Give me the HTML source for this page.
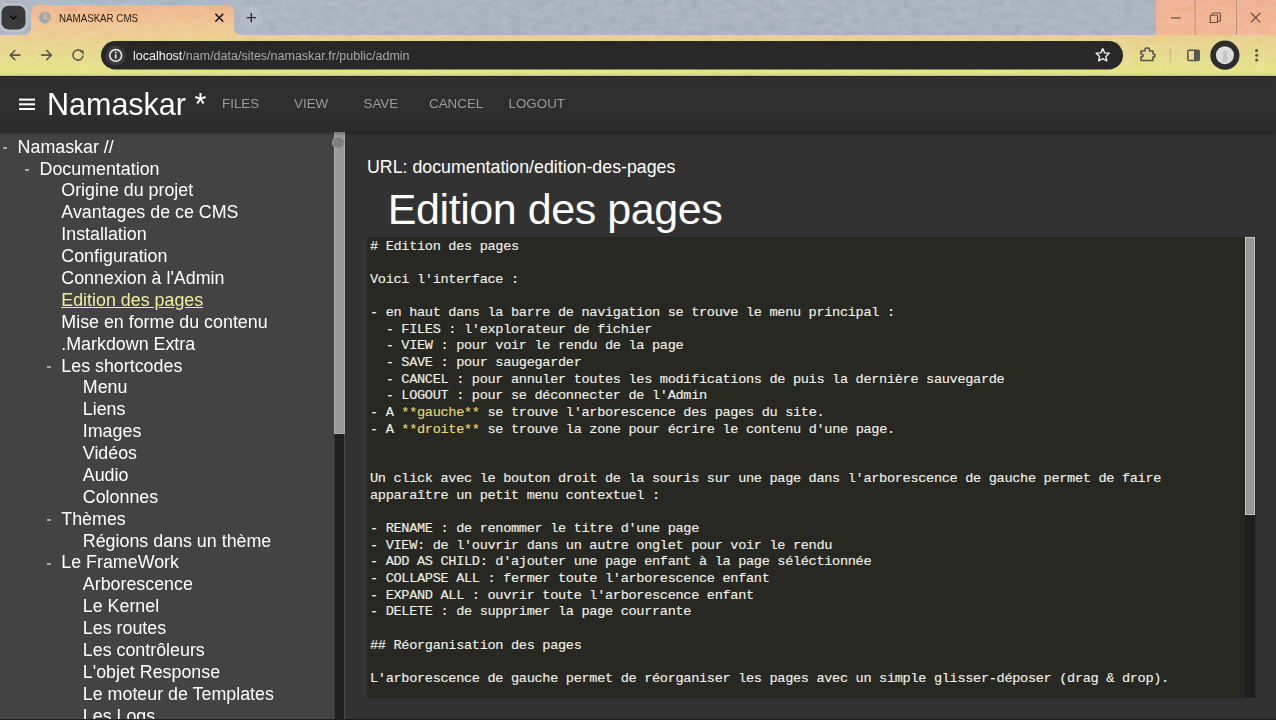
<!DOCTYPE html>
<html><head><meta charset="utf-8">
<style>
*{box-sizing:border-box;margin:0;padding:0}
html,body{width:1276px;height:720px;overflow:hidden;background:#333;font-family:"Liberation Sans",sans-serif}
svg{position:absolute;left:0;top:0;overflow:visible}
#strip{position:absolute;left:0;top:0;width:1276px;height:35px;background:linear-gradient(90deg,#a6b0bb 0%,#9faab8 40%,#a0aab7 80%,#a2acb8 100%)}
#winctl{position:absolute;left:1156px;top:0;width:120px;height:35px;background:linear-gradient(180deg,#eea98a,#eeb08b)}
#toolbar{position:absolute;left:0;top:35px;width:1276px;height:41px;background:linear-gradient(180deg,#e8c884 0%,#e7cc85 15%,#e3d782 55%,#e1e07c 88%,#dfdf7b 100%)}
#omni{position:absolute;left:101px;top:41px;width:1022px;height:29px;border-radius:15px;background:#282828}
#url{position:absolute;left:133px;top:49px;font-size:12.5px;line-height:15px;color:#a8a8a8;white-space:pre}
#url b{font-weight:normal;color:#f2f2f2}
#nav{position:absolute;left:0;top:76px;width:1276px;height:56px;border-top:1px solid #22221a;background:linear-gradient(180deg,#2e2e2e 0%,#2f2f2f 70%,#2a2a2a 100%);box-shadow:0 1px 4px rgba(0,0,0,0.45);z-index:1}
#brand{z-index:2;position:absolute;left:47px;top:87px;font-size:30.5px;line-height:34px;color:#fff;white-space:pre}
.menu{z-index:2;position:absolute;top:96px;font-size:13.4px;color:#9a9a9a;line-height:15px;white-space:pre}
#side{position:absolute;left:0;top:131px;width:334px;height:589px;background:#434343;overflow:hidden}
#sbar{position:absolute;left:334px;top:131px;width:11px;height:589px;background:#202020;border-left:1px solid #3a3a3a;border-right:1px solid #4a4a4a}
#sthumb{position:absolute;left:334px;top:132px;width:11px;height:302px;background:#999;border:1px solid #b0b0b0;border-top-color:#aaa}
#knob{position:absolute;left:331.6px;top:135.8px;width:13.2px;height:13.2px;border-radius:50%;background:#7f7f7f;border:1px solid #a0a0a0;z-index:1}
#content{position:absolute;left:345px;top:131px;width:931px;height:589px;background:#323232}
.row{position:absolute;height:22px;font-size:17.85px;color:#fff;white-space:pre;line-height:22px}
.row.sel{color:#eeeea0;text-decoration:underline}
.dash{position:absolute;width:4px;height:2px;background:#a8a8a8}
#urlline{position:absolute;left:367px;top:156px;font-size:17.8px;line-height:22px;color:#fff;white-space:pre}
#h1{position:absolute;left:387.8px;top:184.5px;letter-spacing:-0.43px;font-size:43px;line-height:48px;color:#fff;white-space:pre}
#editor{position:absolute;left:367px;top:237px;width:878px;height:461px;background:#272822;overflow:hidden}
#escroll{position:absolute;left:1244.6px;top:237px;width:10.8px;height:461px;background:#1f1f1f;box-shadow:1px 0 0 #2a2a2a}
#ethumb{position:absolute;left:1244.6px;top:237px;width:10.8px;height:278px;background:#979797;border:1px solid #c4c4c4}
.ln{-webkit-text-stroke:0.12px currentColor;position:absolute;left:3px;font-family:"Liberation Mono",monospace;font-size:13.6px;letter-spacing:-0.325px;color:#f2f2ea;white-space:pre;height:17px;line-height:16.615px}
.y{color:#e6db74}
#bottomline{position:absolute;left:0;top:719px;width:1276px;height:1px;background:#1e1e1e}
</style></head><body>
<div id="strip"></div>
<div id="winctl"></div>
<div id="toolbar"></div>
<svg width="1276" height="76" viewBox="0 0 1276 76">
  <defs>
    <linearGradient id="tabg" x1="0" y1="0" x2="0" y2="1">
      <stop offset="0" stop-color="#f0ac82"/>
      <stop offset="0.6" stop-color="#eebd87"/>
      <stop offset="1" stop-color="#e9c78a"/>
    </linearGradient>
    <filter id="nz" x="0" y="0" width="100%" height="100%" filterUnits="userSpaceOnUse">
      <feTurbulence type="fractalNoise" baseFrequency="0.09 0.16" numOctaves="3" seed="11"/>
      <feColorMatrix type="matrix" values="0.6 0.2 0.2 0 0  0.6 0.2 0.2 0 0  0.6 0.2 0.2 0 0  0 0 0 0 1"/>
    </filter>
  </defs>
  <!-- tab -->
  <path d="M23 35 Q31 35 31 27 L31 14 Q31 5 40 5 L225 5 Q234 5 234 14 L234 27 Q234 35 242 35 Z" fill="url(#tabg)"/>
  <rect x="0" y="0" width="1276" height="76" filter="url(#nz)" style="mix-blend-mode:soft-light" opacity="0.55"/>
  <!-- dropdown button -->
  <rect x="-0.5" y="3.5" width="29" height="29" rx="9" fill="#bcc5cf" opacity="0.7"/>
  <rect x="1.5" y="5.8" width="24" height="23.6" rx="7" fill="#3a3a3a"/>
  <path d="M10.3 16 L13.4 18.9 L16.5 16" stroke="#0a0a0a" stroke-width="1.6" fill="none" stroke-linecap="round" stroke-linejoin="round"/>
  <circle cx="44.8" cy="17.5" r="5.8" fill="#9fa8b2" stroke="#a8aeb4" stroke-width="0.8"/>
  <path d="M43 13.2 Q45.5 13.8 46 15.8 Q44 16.5 45 18 Q47.5 18.5 49 19.5" stroke="#e8c07a" stroke-width="1.4" fill="none"/>
  <text x="59" y="22" font-family="Liberation Sans" font-size="10.8" fill="#2a2117" textLength="79" lengthAdjust="spacingAndGlyphs">NAMASKAR CMS</text>
  <path d="M215.8 14.2 L222.8 21.2 M222.8 14.2 L215.8 21.2" stroke="#151515" stroke-width="1.6" stroke-linecap="round"/>
  <!-- new tab -->
  <circle cx="251.3" cy="17.6" r="11" fill="#b7bec6" opacity="0.75"/>
  <path d="M251.3 12.9 L251.3 22.3 M246.6 17.6 L256 17.6" stroke="#2e2e2e" stroke-width="1.4"/>
  <!-- window controls -->
  <path d="M1171 18 L1180.5 18" stroke="#6e4d38" stroke-width="1.2"/>
  <path d="M1210.3 15.3 h7.2 v7.2 h-7.2 z M1212.3 15.3 v-1.8 q0 -0.5 0.5 -0.5 h6.6 q1 0 1 1 v6.6 q0 0.5 -0.5 0.5 h-1.8" stroke="#6e4d38" stroke-width="1.1" fill="none"/>
  <path d="M1251 13 L1260.3 22.3 M1260.3 13 L1251 22.3" stroke="#6e4d38" stroke-width="1.1"/>
  <path d="M1195.2 0 V35 M1236.5 0 V35" stroke="#b89383" stroke-width="1"/>
  <!-- nav buttons -->
  <path d="M20 55.1 H10.6 M14.9 50.5 L10.3 55.1 L14.9 59.7" stroke="#58584f" stroke-width="1.6" fill="none" stroke-linecap="round" stroke-linejoin="round"/>
  <path d="M41.6 55.1 H51 M46.7 50.5 L51.3 55.1 L46.7 59.7" stroke="#58584f" stroke-width="1.6" fill="none" stroke-linecap="round" stroke-linejoin="round"/>
  <path d="M81.8 51.6 A5.1 5.1 0 1 0 83.1 55.5" stroke="#58584f" stroke-width="1.6" fill="none"/>
  <path d="M79.2 50.4 L83.6 50.4 L83.6 54.8 Z" fill="#58584f"/>
  <!-- omnibox -->
  <rect x="101" y="41" width="1022" height="28.4" rx="14.2" fill="#282828"/>
  <circle cx="115.7" cy="55.4" r="10" fill="#3a3a3a"/>
  <circle cx="115.7" cy="55.4" r="5.9" stroke="#f4f4f4" stroke-width="1.5" fill="none"/>
  <path d="M115.7 54.2 V58.5" stroke="#f4f4f4" stroke-width="1.6"/>
  <circle cx="115.7" cy="52.4" r="0.9" fill="#f4f4f4"/>
  <path d="M1102.7 48.6 L1104.6 52.9 L1109.3 53.3 L1105.8 56.4 L1106.8 61 L1102.7 58.6 L1098.6 61 L1099.6 56.4 L1096.1 53.3 L1100.8 52.9 Z" stroke="#f0f0f0" stroke-width="1.4" fill="none" stroke-linejoin="round"/>
  <!-- extensions -->
  <path d="M1141 51 H1145 V49.5 Q1145 48 1146.5 48 H1148 Q1149.5 48 1149.5 49.5 V51 H1153 V54 Q1155 54 1155 55.5 Q1155 57 1153 57 V60.5 H1141 V57 Q1143 57 1143 55.5 Q1143 54 1141 54 Z" stroke="#555" stroke-width="1.6" fill="none" stroke-linejoin="round"/>
  <path d="M1170.3 48.3 V62" stroke="#b9b48e" stroke-width="1"/>
  <!-- side panel -->
  <rect x="1187.8" y="50.2" width="11.4" height="10.4" rx="1" stroke="#555" stroke-width="1.5" fill="none"/>
  <rect x="1194" y="50.2" width="5.2" height="10.4" fill="#555"/>
  <!-- avatar -->
  <circle cx="1224.9" cy="55.2" r="14.6" fill="#2d2d2d"/>
  <circle cx="1224.9" cy="55.2" r="9" fill="#dcdcdc"/>
  <path d="M1222.5 62 Q1222 57 1223.5 55.5 Q1222 52.5 1224.5 50.5 Q1227.5 50.5 1227 54 Q1226.5 56 1227.3 58 L1227.5 62 Z" fill="#c4c4c4"/>
  <!-- kebab -->
  <circle cx="1256.6" cy="50.6" r="1.5" fill="#555"/>
  <circle cx="1256.6" cy="55.3" r="1.5" fill="#555"/>
  <circle cx="1256.6" cy="60" r="1.5" fill="#555"/>
</svg>
<div id="url"><b>localhost</b>/nam/data/sites/namaskar.fr/public/admin</div>
<div id="nav"></div>
<svg width="1276" height="720" viewBox="0 0 1276 720" style="z-index:2">
  <rect x="19" y="98.6" width="16" height="2" fill="#fff"/>
  <rect x="19" y="103.3" width="16" height="2" fill="#fff"/>
  <rect x="19" y="108" width="16" height="2" fill="#fff"/>
</svg>
<div id="brand">Namaskar *</div>
<div class="menu" style="left:222px">FILES</div>
<div class="menu" style="left:294px">VIEW</div>
<div class="menu" style="left:363.5px">SAVE</div>
<div class="menu" style="left:429px">CANCEL</div>
<div class="menu" style="left:508.5px">LOGOUT</div>
<div id="side">
<div class="dash" style="left:3px;top:16px"></div>
<div class="row" style="left:17.6px;top:4.70px">Namaskar //</div>
<div class="dash" style="left:25px;top:38px"></div>
<div class="row" style="left:39.5px;top:26.58px">Documentation</div>
<div class="row" style="left:61.3px;top:48.46px">Origine du projet</div>
<div class="row" style="left:61.3px;top:70.34px">Avantages de ce CMS</div>
<div class="row" style="left:61.3px;top:92.22px">Installation</div>
<div class="row" style="left:61.3px;top:114.10px">Configuration</div>
<div class="row" style="left:61.3px;top:135.98px">Connexion à l&#x27;Admin</div>
<div class="row sel" style="left:61.3px;top:157.86px">Edition des pages</div>
<div class="row" style="left:61.3px;top:179.74px">Mise en forme du contenu</div>
<div class="row" style="left:61.3px;top:201.62px">.Markdown Extra</div>
<div class="dash" style="left:47px;top:235px"></div>
<div class="row" style="left:61.3px;top:223.50px">Les shortcodes</div>
<div class="row" style="left:82.8px;top:245.38px">Menu</div>
<div class="row" style="left:82.8px;top:267.26px">Liens</div>
<div class="row" style="left:82.8px;top:289.14px">Images</div>
<div class="row" style="left:82.8px;top:311.02px">Vidéos</div>
<div class="row" style="left:82.8px;top:332.90px">Audio</div>
<div class="row" style="left:82.8px;top:354.78px">Colonnes</div>
<div class="dash" style="left:47px;top:388px"></div>
<div class="row" style="left:61.3px;top:376.66px">Thèmes</div>
<div class="row" style="left:82.8px;top:398.54px">Régions dans un thème</div>
<div class="dash" style="left:47px;top:432px"></div>
<div class="row" style="left:61.3px;top:420.42px">Le FrameWork</div>
<div class="row" style="left:82.8px;top:442.30px">Arborescence</div>
<div class="row" style="left:82.8px;top:464.18px">Le Kernel</div>
<div class="row" style="left:82.8px;top:486.06px">Les routes</div>
<div class="row" style="left:82.8px;top:507.94px">Les contrôleurs</div>
<div class="row" style="left:82.8px;top:529.82px">L&#x27;objet Response</div>
<div class="row" style="left:82.8px;top:551.70px">Le moteur de Templates</div>
<div class="row" style="left:82.8px;top:573.58px">Les Logs</div>
</div>
<div id="sbar"></div>
<div id="sthumb"></div>
<div id="knob"></div>
<div id="content"></div>
<div id="urlline">URL: documentation/edition-des-pages</div>
<div id="h1">Edition des pages</div>
<div id="editor">
<div class="ln" style="top:1.80px"># Edition des pages</div>
<div class="ln" style="top:35.03px">Voici l&#x27;interface :</div>
<div class="ln" style="top:68.26px">- en haut dans la barre de navigation se trouve le menu principal :</div>
<div class="ln" style="top:84.87px">  - FILES : l&#x27;explorateur de fichier</div>
<div class="ln" style="top:101.49px">  - VIEW : pour voir le rendu de la page</div>
<div class="ln" style="top:118.10px">  - SAVE : pour saugegarder</div>
<div class="ln" style="top:134.72px">  - CANCEL : pour annuler toutes les modifications de puis la dernière sauvegarde</div>
<div class="ln" style="top:151.34px">  - LOGOUT : pour se déconnecter de l&#x27;Admin</div>
<div class="ln" style="top:167.95px">- A <span class="y">**gauche**</span> se trouve l&#x27;arborescence des pages du site.</div>
<div class="ln" style="top:184.56px">- A <span class="y">**droite**</span> se trouve la zone pour écrire le contenu d&#x27;une page.</div>
<div class="ln" style="top:234.41px">Un click avec le bouton droit de la souris sur une page dans l&#x27;arborescence de gauche permet de faire</div>
<div class="ln" style="top:251.02px">apparaître un petit menu contextuel :</div>
<div class="ln" style="top:284.25px">- RENAME : de renommer le titre d&#x27;une page</div>
<div class="ln" style="top:300.87px">- VIEW: de l&#x27;ouvrir dans un autre onglet pour voir le rendu</div>
<div class="ln" style="top:317.48px">- ADD AS CHILD: d&#x27;ajouter une page enfant à la page séléctionnée</div>
<div class="ln" style="top:334.10px">- COLLAPSE ALL : fermer toute l&#x27;arborescence enfant</div>
<div class="ln" style="top:350.71px">- EXPAND ALL : ouvrir toute l&#x27;arborescence enfant</div>
<div class="ln" style="top:367.33px">- DELETE : de supprimer la page courrante</div>
<div class="ln" style="top:400.56px">## Réorganisation des pages</div>
<div class="ln" style="top:433.79px">L&#x27;arborescence de gauche permet de réorganiser les pages avec un simple glisser-déposer (drag &amp; drop).</div>
</div>
<div id="escroll"></div>
<div id="ethumb"></div>
<div id="bottomline"></div>
</body></html>
